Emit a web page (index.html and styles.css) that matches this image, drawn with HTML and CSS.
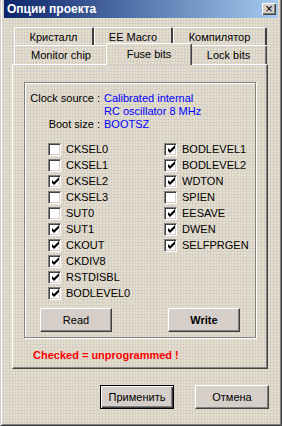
FILE: index.html
```html
<!DOCTYPE html>
<html lang="ru">
<head>
    <meta charset="UTF-8">
    <meta name="viewport" content="width=device-width, initial-scale=1.0">
    <title>Опции проекта</title>
    <link rel="stylesheet" href="styles.css">
</head>
<body>
    <div class="window">
        <div class="titlebar">
            <span class="title">Опции проекта</span>
            <span class="close">&#215;</span>
        </div>

        <div class="tabs">
            <div class="tab-row back">
                <div class="tab">Кристалл</div>
                <div class="tab">EE Macro</div>
                <div class="tab">Компилятор</div>
            </div>
            <div class="tab-row front">
                <div class="tab">Monitor chip</div>
                <div class="tab active">Fuse bits</div>
                <div class="tab">Lock bits</div>
            </div>
        </div>

        <div class="panel">
            <div class="group">
                <div class="info">
                    <span class="key">Clock source :</span>
                    <span class="val">Calibrated internal<br>RC oscillator 8 MHz</span>
                    <span class="key">Boot size :</span>
                    <span class="val">BOOTSZ</span>
                </div>

                <div class="fuses" id="fuses"></div>

                <div class="actions">
                    <button class="btn">Read</button>
                    <button class="btn bold">Write</button>
                </div>
            </div>
            <p class="warn">Checked = unprogrammed !</p>
        </div>

        <div class="footer">
            <button class="btn default">Применить</button>
            <button class="btn">Отмена</button>
        </div>
    </div>

    <script>
        const fuses = [
            ['CKSEL0', false], ['CKSEL1', false], ['CKSEL2', true], ['CKSEL3', false],
            ['SUT0', false], ['SUT1', true], ['CKOUT', true], ['CKDIV8', true],
            ['RSTDISBL', true], ['BODLEVEL0', true],
            ['BODLEVEL1', true], ['BODLEVEL2', true], ['WDTON', true], ['SPIEN', false],
            ['EESAVE', true], ['DWEN', true], ['SELFPRGEN', true]
        ];

        const tick = '<svg width="9" height="9" viewBox="0 0 9 9"><path d="M1 3v3l2 2l5-5v-3l-5 5z" fill="#000"/></svg>';

        const box = document.getElementById('fuses');
        fuses.forEach(([name, checked]) => {
            const row = document.createElement('label');
            row.className = 'fuse';
            row.innerHTML = `<span class="check">${checked ? tick : ''}</span><span>${name}</span>`;
            box.appendChild(row);
        });
    </script>
</body>
</html>
```

FILE: styles.css
```css
body {
    margin: 0;
    font-family: "Liberation Sans", Arial, sans-serif;
    font-size: 11px;
    color: #000;
}
.window {
    width: 282px;
    height: 426px;
    box-sizing: border-box;
    padding: 0 3px 0 3px;
    background-color: #d6cec8;
    background-image: radial-gradient(circle at 1px 1px, #efeacb 0.6px, transparent 0.9px);
    background-size: 3px 3px;
    border-left: 1px solid #d6cec8;
    border-right: 1px solid #404040;
    border-bottom: 1px solid #404040;
    box-shadow: inset 1px 0 #fff, inset -1px -1px #808080;
}
.titlebar {
    height: 18px;
    display: flex;
    align-items: center;
    justify-content: space-between;
    background: linear-gradient(to right, #0a246a, #a6caf0);
    padding: 0 2px 0 3px;
}
.title {
    color: #fff;
    font-weight: bold;
    font-size: 12px;
}
.close {
    width: 14px;
    height: 12px;
    line-height: 11px;
    text-align: center;
    font-size: 13px;
    background: #d6cec8;
    box-shadow: inset 1px 1px #fff, inset -1px -1px #404040, inset -2px -2px #808080;
}
.tabs {
    margin: 9px 0 0 10px;
    width: 253px;
}
.tab-row {
    display: grid;
}
.tab-row.back {
    grid-template-columns: 80px 79px 1fr;
    height: 18px;
}
.tab-row.front {
    grid-template-columns: 94px 82px 1fr;
    height: 19px;
}
.tab {
    border-top: 1px solid #fff;
    border-left: 1px solid #fff;
    border-right: 1px solid #404040;
    box-shadow: inset -1px 0 #808080;
    border-radius: 2px 2px 0 0;
    text-align: center;
    padding-top: 3px;
    background: inherit;
}
.tab-row.back .tab {
    border-right-width: 2px;
    box-shadow: none;
}
.tab.active {
    position: relative;
    z-index: 1;
    margin: -2px -2px -1px -2px;
    padding-top: 4px;
    background-color: #d6cec8;
    background-image: radial-gradient(circle at 1px 1px, #efeacb 0.6px, transparent 0.9px);
    background-size: 3px 3px;
}
.panel {
    margin-left: 8px;
    width: 256px;
    height: 305px;
    box-sizing: border-box;
    border-top: 1px solid #fff;
    border-left: 1px solid #fff;
    border-right: 1px solid #404040;
    border-bottom: 1px solid #404040;
    box-shadow: inset -1px -1px #808080;
    padding: 17px 0 0 11px;
}
.group {
    width: 232px;
    height: 256px;
    box-sizing: border-box;
    border: 1px solid #808080;
    box-shadow: 1px 1px #fff, inset 1px 1px #fff;
    padding: 9px 0 0 0;
}
.info {
    display: grid;
    grid-template-columns: 75px 1fr;
    column-gap: 4px;
    line-height: 13px;
    margin-bottom: 10px;
}
.key {
    text-align: right;
}
.val {
    color: #0000ff;
}
.fuses {
    display: grid;
    grid-template-columns: 116px 1fr;
    grid-template-rows: repeat(10, 16px);
    grid-auto-flow: column;
    padding-left: 23px;
}
.fuse {
    display: flex;
    align-items: center;
    gap: 5px;
}
.check {
    width: 13px;
    height: 13px;
    box-sizing: border-box;
    background: #fff;
    border-top: 1px solid #808080;
    border-left: 1px solid #808080;
    border-right: 1px solid #fff;
    border-bottom: 1px solid #fff;
    box-shadow: inset 1px 1px #404040, inset -1px -1px #d6cec8;
    display: flex;
    align-items: center;
    justify-content: center;
}
.check svg {
    margin: 1px 0 0 1px;
}
.actions {
    display: flex;
    gap: 56px;
    padding: 7px 0 0 15px;
}
.btn {
    width: 72px;
    height: 24px;
    font-family: "Liberation Sans", Arial, sans-serif;
    font-size: 11px;
    color: #000;
    background: #d6cec8;
    border: none;
    border-top: 1px solid #fff;
    border-left: 1px solid #fff;
    border-right: 1px solid #404040;
    border-bottom: 1px solid #404040;
    box-shadow: inset -1px -1px #808080;
    padding: 0;
}
.btn.bold {
    font-weight: bold;
}
.warn {
    margin: 11px 0 0 9px;
    color: #ff0000;
    font-weight: bold;
}
.footer {
    display: flex;
    justify-content: flex-end;
    gap: 21px;
    padding: 16px 9px 0 0;
}
.footer .btn {
    width: 74px;
}
.btn.default {
    border: 1px solid #000;
    box-shadow: inset 1px 1px #fff, inset -1px -1px #404040, inset -2px -2px #808080;
}
```
